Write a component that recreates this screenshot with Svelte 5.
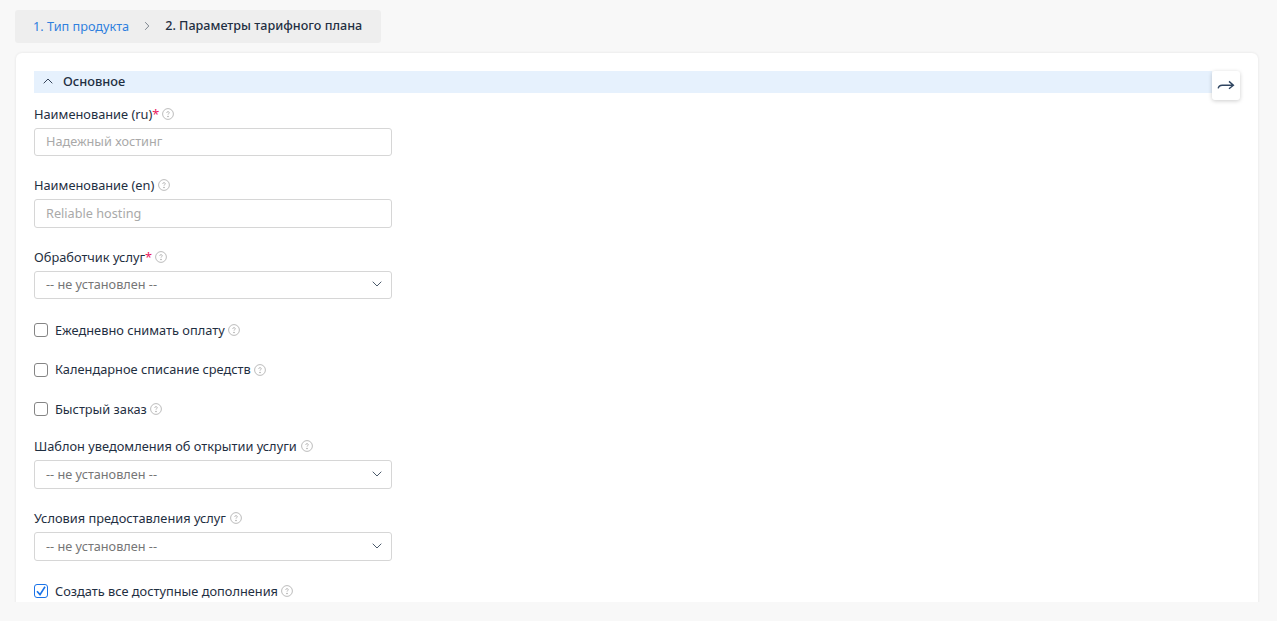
<script>
  const q = { };
</script>

{#snippet help()}
  <svg class="help" viewBox="0 0 12 12" aria-hidden="true"><circle cx="6" cy="6" r="5.4" /><path d="M4.7 4.9c0-.8.6-1.3 1.3-1.3s1.3.5 1.3 1.1c0 1-1.3 1-1.3 2" /><circle class="dot" cx="6" cy="8.5" r=".7" /></svg>
{/snippet}

{#snippet chevron()}
  <svg class="chev" viewBox="0 0 10 6" aria-hidden="true"><path d="M.7.7 5 5 9.3.7" /></svg>
{/snippet}

{#snippet check(text, on = false)}
  <label class="check">
    <span class="box" class:on>
      {#if on}<svg viewBox="0 0 14 14" aria-hidden="true"><path d="M3 7.2 6 10.6 11 2.8" /></svg>{/if}
    </span>
    <span class="text">{text}</span>
    {@render help()}
  </label>
{/snippet}

{#snippet select(label, req = false)}
  <div class="field">
    <div class="label">{label}{#if req}<i>*</i>{/if}{@render help()}</div>
    <div class="control select"><span>-- не установлен --</span>{@render chevron()}</div>
  </div>
{/snippet}

<div class="page">
  <nav class="crumbs">
    <a href="#a">1. Тип продукта</a>
    <svg class="sep" viewBox="0 0 6 10" aria-hidden="true"><path d="M1.2 1.2 4.8 5 1.2 8.8" /></svg>
    <span>2. Параметры тарифного плана</span>
  </nav>
  <main class="card">
    <div class="section">
      <svg class="up" viewBox="0 0 10 6" aria-hidden="true"><path d="M.7 5.3 5 1l4.3 4.3" /></svg>
      <span>Основное</span>
    </div>
    <button class="go" aria-label="Свернуть">
      <svg viewBox="0 0 18 12"><path d="M1.2 8.4c.4-2.6 1.8-3.2 4-3.2h11M12 1.4l4.4 3.8-4.4 3.6" /></svg>
    </button>
    <div class="field">
      <div class="label">Наименование (ru)<i>*</i>{@render help()}</div>
      <div class="control ph">Надежный хостинг</div>
    </div>
    <div class="field">
      <div class="label">Наименование (en){@render help()}</div>
      <div class="control ph">Reliable hosting</div>
    </div>
    {@render select('Обработчик услуг', true)}
    <div class="checks">
      {@render check('Ежедневно снимать оплату')}
      {@render check('Календарное списание средств')}
      {@render check('Быстрый заказ')}
    </div>
    {@render select('Шаблон уведомления об открытии услуги')}
    {@render select('Условия предоставления услуг')}
    <div class="last">
      {@render check('Создать все доступные дополнения', true)}
    </div>
  </main>
</div>

<style>
  :global(body) {
    margin: 0;
    background: #f8f8f8;
    font-family: "Noto Sans", sans-serif;
    color: #1f2f42;
  }
  .page {
    height: 602px;
    overflow: hidden;
    padding: 10px 19px 0 15px;
    box-sizing: border-box;
  }
  .crumbs {
    width: 366px;
    height: 33px;
    box-sizing: border-box;
    padding: 0 18px 2px;
    display: flex;
    align-items: center;
    white-space: nowrap;
    background: #eeeeee;
    border-radius: 3px;
    font-size: 12.7px;
  }
  .crumbs a { color: #2f80de; text-decoration: none; }
  .crumbs span { color: #1f2f42; font-weight: 500; font-size: 12.6px; }
  .sep {
    width: 6px;
    height: 10px;
    margin: 0 15px;
    flex: none;
    fill: none;
    stroke: #7d858e;
    stroke-width: 1;
  }
  .card {
    position: relative;
    height: 640px;
    margin: 10px 0 0 1px;
    padding: 18px 18px 0;
    background: #fff;
    border-radius: 6px;
    box-shadow: 0 0 3px rgba(0, 0, 0, .09);
  }
  .section {
    height: 22px;
    box-sizing: border-box;
    margin-right: 28px;
    padding: 0 0 2px 9px;
    display: flex;
    align-items: center;
    gap: 10px;
    background: #e6f1fd;
    font-size: 12.8px;
    font-weight: 500;
  }
  .up {
    width: 10px;
    height: 6px;
    fill: none;
    stroke: #35445a;
    stroke-width: 1;
  }
  .go {
    position: absolute;
    top: 18px;
    right: 18px;
    width: 28px;
    height: 29px;
    padding: 0;
    display: flex;
    align-items: center;
    justify-content: center;
    background: #fff;
    border: 0;
    border-radius: 3px;
    box-shadow: 0 1px 4px rgba(0, 0, 0, .2);
  }
  .go svg {
    width: 18px;
    height: 12px;
    fill: none;
    stroke: #2f4560;
    stroke-width: 1.4;
  }
  .field {
    width: 358px;
    margin-bottom: 19.85px;
  }
  .section + .go + .field { margin-top: 11.8px; }
  .label {
    height: 18px;
    margin-bottom: 5px;
    display: flex;
    align-items: center;
    font-size: 12.8px;
    line-height: 18px;
  }
  .label i {
    margin-right: -1px;
    color: #e8175d;
    font-style: normal;
  }
  .help {
    width: 12px;
    height: 12px;
    margin-left: 4px;
    flex: none;
    fill: none;
    stroke: #b4b4b4;
    stroke-width: .9;
  }
  .help .dot { fill: #999; stroke: none; }
  .control {
    height: 28.65px;
    box-sizing: border-box;
    padding: 0 11px 1.4px;
    display: flex;
    align-items: center;
    background: #fff;
    border: 1px solid #d6d6d6;
    border-radius: 3px;
    font-size: 12.7px;
  }
  .ph { color: #a9a9a9; }
  .select {
    justify-content: space-between;
    color: #767676;
  }
  .chev {
    width: 10px;
    height: 6px;
    margin-right: -2px;
    fill: none;
    stroke: #4b5a6b;
    stroke-width: 1;
  }
  .checks {
    display: flex;
    flex-direction: column;
    gap: 21.5px;
    margin: 21.6px 0 19.45px;
  }
  .last { margin-top: 21.5px; }
  .check {
    height: 18px;
    display: flex;
    align-items: center;
    font-size: 12.8px;
  }
  .text { margin-bottom: .6px; }
  .box {
    width: 14px;
    height: 14px;
    box-sizing: border-box;
    margin-right: 7px;
    border: 1px solid #858585;
    border-radius: 3px;
    background: #fff;
    flex: none;
  }
  .box.on {
    border-color: #1a73e8;
    border-width: 1.5px;
  }
  .box svg {
    display: block;
    width: 14px;
    height: 14px;
    margin: -1.5px;
    fill: none;
    stroke: #1a73e8;
    stroke-width: 1.6;
  }
  .check .help { margin-left: 3px; }
</style>
